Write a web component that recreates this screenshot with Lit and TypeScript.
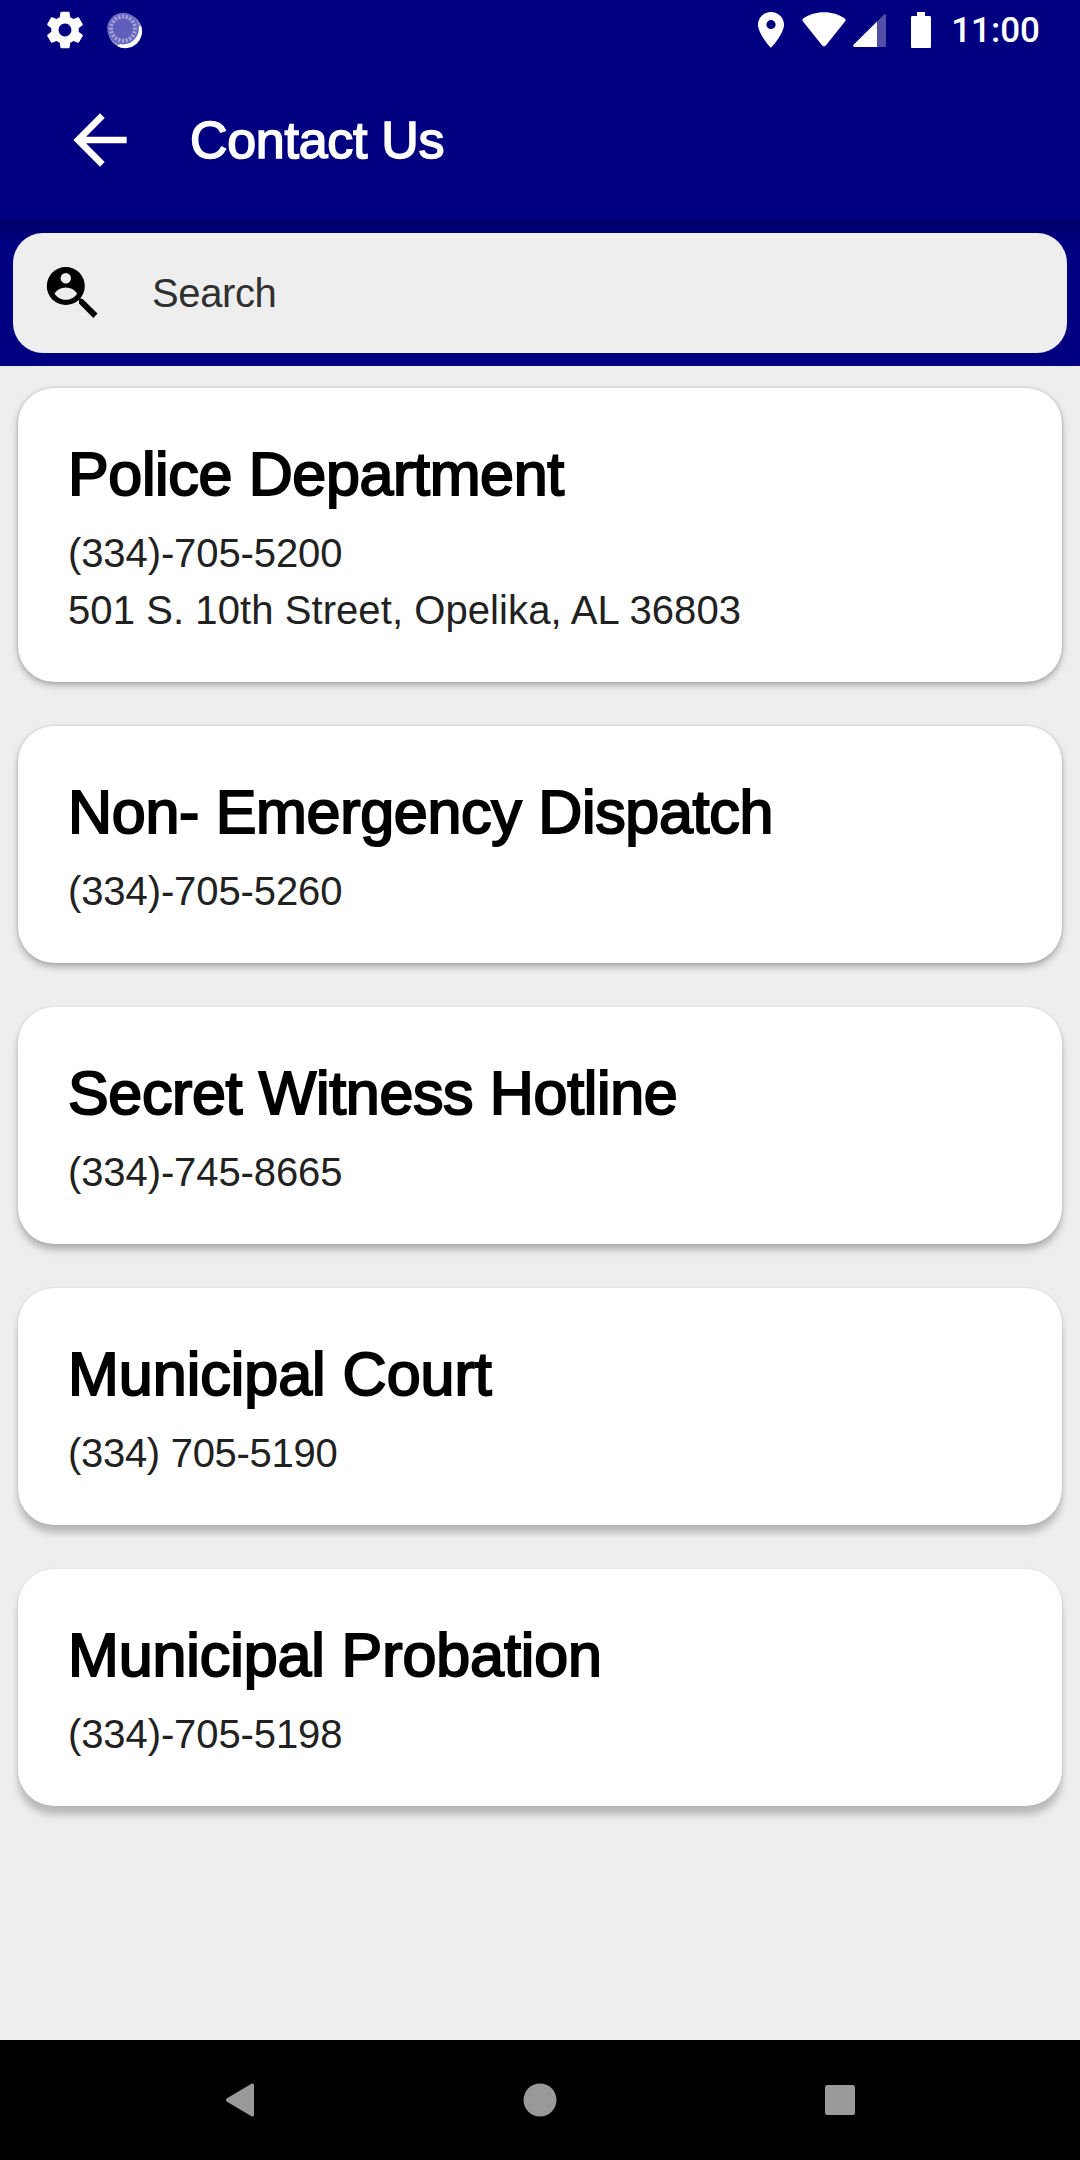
import { LitElement, html, css, svg } from "lit";
import { customElement, property } from "lit/decorators.js";

interface Contact {
  name: string;
  lines: string[];
}

const CONTACTS: Contact[] = [
  { name: "Police Department", lines: ["(334)-705-5200", "501 S. 10th Street, Opelika, AL 36803"] },
  { name: "Non- Emergency Dispatch", lines: ["(334)-705-5260"] },
  { name: "Secret Witness Hotline", lines: ["(334)-745-8665"] },
  { name: "Municipal Court", lines: ["(334) 705-5190"] },
  { name: "Municipal Probation", lines: ["(334)-705-5198"] },
];

@customElement("status-bar")
class StatusBar extends LitElement {
  static styles = css`
    :host {
      display: flex;
      justify-content: space-between;
      height: 60px;
      padding: 0 40px 0 43px;
      color: #fff;
      font: 500 35px/62px Roboto, sans-serif;
    }
    .group {
      display: flex;
      align-items: center;
    }
    svg {
      display: block;
      fill: currentColor;
    }
    .spinner {
      margin-left: 18px;
    }
    .wifi {
      margin-left: 18px;
    }
    .signal {
      margin-left: 7px;
    }
    .battery {
      margin-left: 24px;
    }
    .time {
      height: 60px;
      margin-left: 20px;
    }
  `;

  render() {
    const ticks = Array.from({ length: 20 }, (_, i) => i * 18);
    return html`
      <div class="group">
        <svg width="44" height="44" viewBox="0 0 24 24">
          <path d="M19.43 12.98c.04-.32.07-.64.07-.98s-.03-.66-.07-.98l2.11-1.65c.19-.15.24-.42.12-.64l-2-3.46c-.12-.22-.39-.3-.61-.22l-2.49 1c-.52-.4-1.08-.73-1.69-.98l-.38-2.65C14.46 2.18 14.25 2 14 2h-4c-.25 0-.46.18-.49.42l-.38 2.65c-.61.25-1.17.59-1.69.98l-2.49-1c-.23-.09-.49 0-.61.22l-2 3.46c-.13.22-.07.49.12.64l2.11 1.65c-.04.32-.07.65-.07.98s.03.66.07.98l-2.11 1.65c-.19.15-.24.42-.12.64l2 3.46c.12.22.39.3.61.22l2.49-1c.52.4 1.08.73 1.69.98l.38 2.65c.03.24.24.42.49.42h4c.25 0 .46-.18.49-.42l.38-2.65c.61-.25 1.17-.59 1.69-.98l2.49 1c.23.09.49 0 .61-.22l2-3.46c.12-.22.07-.49-.12-.64l-2.11-1.65zM12 15.5c-1.93 0-3.5-1.57-3.5-3.5s1.57-3.5 3.5-3.5 3.5 1.57 3.5 3.5-1.57 3.5-3.5 3.5z"></path>
        </svg>
        <svg class="spinner" width="38" height="38" viewBox="0 0 38 38">
          <circle cx="20" cy="20" r="16.8" fill="#8f8fcc"></circle>
          <path d="M35.8 14A16.8 16.8 0 0 1 12 35L18 31L32 18Z" fill="#fff"></path>
          <circle cx="18" cy="17.6" r="15.8" fill="#6a6ac0"></circle>
          ${ticks.map(
            (a) => svg`<path d="M18 3.6v4" transform="rotate(${a} 18 17.6)" stroke="#a9a9dc" stroke-width="1.8"></path>`
          )}
          <circle cx="18" cy="17.6" r="10" fill="#5f5fbb"></circle>
        </svg>
      </div>
      <div class="group">
        <svg width="26" height="36" viewBox="5 2 14 20" preserveAspectRatio="none">
          <path d="M12 2C8.130 2 5 5.130 5 9c0 5.250 7 13 7 13s7-7.750 7-13c0-3.870-3.130-7-7-7zm0 9.500a2.500 2.500 0 0 1 0-5 2.500 2.500 0 0 1 0 5z"></path>
        </svg>
        <svg class="wifi" width="44" height="36" viewBox="0 0 44 36">
          <path d="M1.200 9.800C0 8.500 .2 7.200 1.500 6.300 7 2.500 14 .3 22 .3s15 2.200 20.500 6c1.300.9 1.500 2.200.3 3.500L24 33.300c-1.300 1.500-2.700 1.500-4 0z"></path>
        </svg>
        <svg class="signal" width="34" height="36" viewBox="0 0 34 36">
          <path d="M24 9.500V35H1.800C.3 35-.2 33.600.8 32.500z"></path>
          <path d="M24 9.500L30.800 2.700C32 1.500 33 2 33 3.500V33.500C33 34.500 32.500 35 31.500 35H24z" fill="#5050a8"></path>
        </svg>
        <svg class="battery" width="20" height="36" viewBox="0 0 20 36">
          <path d="M6 0h8v4h4.500C19.500 4 20 4.500 20 5.500v29c0 1-.5 1.500-1.500 1.500h-17C.5 36 0 35.500 0 34.500v-29C0 4.500.5 4 1.500 4H6z"></path>
        </svg>
        <span class="time">11:00</span>
      </div>
    `;
  }
}

@customElement("contact-card")
class ContactCard extends LitElement {
  static styles = css`
    :host {
      display: block;
      box-sizing: border-box;
      padding: 50px 50px 43px;
      border-radius: 36px;
      background: #fff;
      color: #212121;
      font: 40px/57px "Liberation Sans", Arial, sans-serif;
    }
    .name {
      margin: 0 0 15px;
      color: #000;
      font-size: 61px;
      font-weight: 400;
      line-height: 72px;
      letter-spacing: var(--name-tracking, -0.35px);
      white-space: nowrap;
      -webkit-text-stroke: 2px #000;
    }
    .line {
      white-space: nowrap;
      letter-spacing: var(--phone-tracking, -0.1px);
    }
    .line + .line {
      letter-spacing: 0.08px;
    }
  `;

  @property({ attribute: false }) contact!: Contact;

  render() {
    return html`
      <h2 class="name">${this.contact.name}</h2>
      ${this.contact.lines.map((l) => html`<div class="line">${l}</div>`)}
    `;
  }
}

@customElement("app-root")
class AppRoot extends LitElement {
  static styles = css`
    :host {
      display: flex;
      flex-direction: column;
      height: 2160px;
      background: #eeeeee;
      font-family: "Liberation Sans", Arial, sans-serif;
    }
    svg {
      display: block;
    }
    .header {
      height: 220px;
      background: #000080;
    }
    .toolbar {
      display: flex;
      align-items: center;
      height: 160px;
      padding-left: 60px;
      color: #fff;
    }
    .title {
      margin: 0 0 0 50px;
      font-size: 52px;
      font-weight: 400;
      line-height: 60px;
      letter-spacing: -0.3px;
      -webkit-text-stroke: 1.6px #fff;
    }
    .search-band {
      height: 146px;
      box-sizing: border-box;
      padding: 13px;
      background: linear-gradient(#00006a, #000080 22px);
    }
    .search {
      display: flex;
      align-items: center;
      height: 120px;
      border-radius: 30px;
      padding-left: 31px;
      background: #eeeeee;
      color: #303030;
      font-size: 40px;
    }
    .hint {
      margin-left: 52px;
      letter-spacing: -0.4px;
    }
    .list {
      flex: 1;
      display: flex;
      flex-direction: column;
      gap: 44px;
      padding: 22px 18px 0;
    }
    .card-0 {
      box-shadow: 0 3px 7px rgba(0, 0, 0, 0.3), 0 0 3px rgba(0, 0, 0, 0.14);
    }
    .card-1 {
      --name-tracking: -0.3px;
      box-shadow: 0 4px 7px rgba(0, 0, 0, 0.28), 0 0 3px rgba(0, 0, 0, 0.12);
    }
    .card-2 {
      box-shadow: 0 6px 7px rgba(0, 0, 0, 0.25), 0 0 3px rgba(0, 0, 0, 0.1);
    }
    .card-3 {
      --name-tracking: 0;
      --phone-tracking: -0.3px;
      box-shadow: 0 8px 7px rgba(0, 0, 0, 0.22), 0 0 3px rgba(0, 0, 0, 0.1);
    }
    .card-4 {
      --name-tracking: -0.1px;
      box-shadow: 0 9px 7px rgba(0, 0, 0, 0.22), 0 0 3px rgba(0, 0, 0, 0.08);
    }
    .nav {
      display: flex;
      align-items: center;
      justify-content: space-between;
      height: 120px;
      box-sizing: border-box;
      padding: 0 225px 0 226px;
      background: #000;
    }
    .nav svg {
      fill: #999;
    }
  `;

  render() {
    return html`
      <header class="header">
        <status-bar></status-bar>
        <div class="toolbar">
          <svg width="80" height="80" viewBox="0 0 24 24" fill="currentColor">
            <path d="M20 11H7.830l5.590-5.590L12 4l-8 8 8 8 1.410-1.410L7.830 13H20v-2z"></path>
          </svg>
          <h1 class="title">Contact Us</h1>
        </div>
      </header>
      <div class="search-band">
        <div class="search">
          <svg width="56" height="56" viewBox="44 265 56 56">
            <circle cx="65.8" cy="286" r="19"></circle>
            <circle cx="65.8" cy="278.300" r="5.200" fill="#eeeeee"></circle>
            <path d="M54.500 293.500C57 289.500 61 287.500 65.800 287.500S74.600 289.500 77.100 293.500C74.600 297.500 70.500 299.800 65.800 299.800S57 297.500 54.500 293.500z" fill="#eeeeee"></path>
            <path d="M78 297.500L83 299.300L97.500 313.500L93.300 318L79 303.500V299.500z"></path>
          </svg>
          <span class="hint">Search</span>
        </div>
      </div>
      <main class="list">
        ${CONTACTS.map((c, i) => html`<contact-card class="card-${i}" .contact=${c}></contact-card>`)}
      </main>
      <nav class="nav">
        <svg width="28" height="34" viewBox="0 0 28 34">
          <path d="M25.500 .8C27 0 28 .8 28 2.300V31.700C28 33.200 27 34 25.500 33.200L1 18.800C-.3 17.800-.3 16.200 1 15.200z"></path>
        </svg>
        <svg width="34" height="34" viewBox="0 0 34 34"><circle cx="17" cy="17" r="16.500"></circle></svg>
        <svg width="30" height="30" viewBox="0 0 30 30"><rect width="30" height="30" rx="2.500"></rect></svg>
      </nav>
    `;
  }
}
